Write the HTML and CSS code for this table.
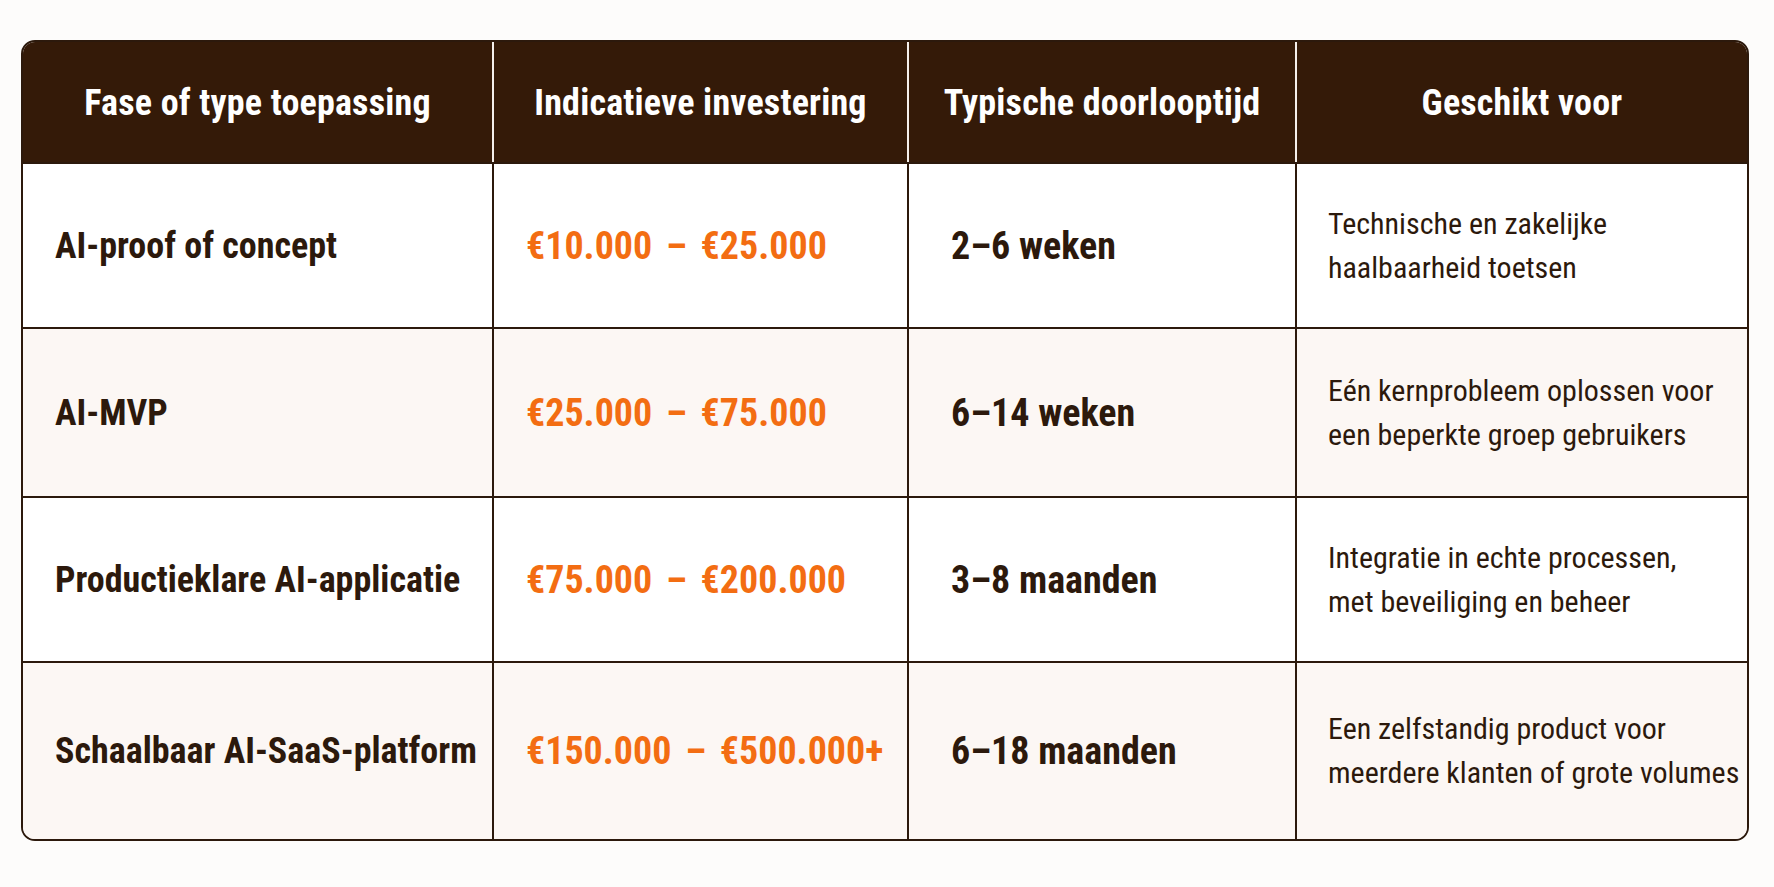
FILE: index.html
```html
<!DOCTYPE html>
<html lang="nl">
<head>
<meta charset="utf-8">
<title>Indicatieve kosten AI-toepassingen</title>
<link rel="stylesheet" href="styles.css">
</head>
<body>
<div class="table">
  <div class="row head">
    <div class="cell">Fase of type toepassing</div>
    <div class="cell">Indicatieve investering</div>
    <div class="cell">Typische doorlooptijd</div>
    <div class="cell">Geschikt voor</div>
  </div>
  <div class="row r1">
    <div class="cell name">AI-proof of concept</div>
    <div class="cell price">€10.000 – €25.000</div>
    <div class="cell time">2–6 weken</div>
    <div class="cell desc">Technische en zakelijke<br>haalbaarheid toetsen</div>
  </div>
  <div class="row r2 alt">
    <div class="cell name">AI-MVP</div>
    <div class="cell price">€25.000 – €75.000</div>
    <div class="cell time">6–14 weken</div>
    <div class="cell desc">Eén kernprobleem oplossen voor<br>een beperkte groep gebruikers</div>
  </div>
  <div class="row r3">
    <div class="cell name">Productieklare AI-applicatie</div>
    <div class="cell price">€75.000 – €200.000</div>
    <div class="cell time">3–8 maanden</div>
    <div class="cell desc">Integratie in echte processen,<br>met beveiliging en beheer</div>
  </div>
  <div class="row r4 alt">
    <div class="cell name">Schaalbaar AI-SaaS-platform</div>
    <div class="cell price">€150.000 – €500.000+</div>
    <div class="cell time">6–18 maanden</div>
    <div class="cell desc">Een zelfstandig product voor<br>meerdere klanten of grote volumes</div>
  </div>
</div>
</body>
</html>
```
FILE: styles.css
```css
* { box-sizing: border-box; }

body {
  margin: 0;
  background: #fdfcfb;
  font-family: "Roboto", "Roboto Condensed", "Liberation Sans", sans-serif;
  font-stretch: 75%;
  color: #2c190c;
}

.table {
  margin: 40px 0 0 21px;
  width: 1728px;
  border: 2px solid #2c190c;
  border-radius: 14px;
  overflow: hidden;
  background: #ffffff;
}

.row {
  display: grid;
  grid-template-columns: 469px 415px 388px 1fr;
  border-top: 2px solid #2c190c;
}

.row.head {
  height: 120px;
  border-top: none;
  background: #341a08;
  color: #ffffff;
}

.r1 { height: 165px; }
.r2 { height: 169px; }
.r3 { height: 165px; }
.r4 { height: 178px; }

.row.alt { background: #fcf7f4; }

.cell {
  display: flex;
  align-items: center;
  padding-left: 32px;
  border-left: 2px solid #2c190c;
}

.cell:first-child { border-left: none; }

.head .cell {
  justify-content: center;
  padding-left: 0;
  padding-top: 2px;
  font-size: 36px;
  font-weight: 700;
  letter-spacing: 0.2px;
  border-left-color: #f4efeb;
}

.name {
  font-size: 36px;
  font-weight: 700;
}

.price {
  font-size: 38px;
  font-weight: 700;
  word-spacing: 5px;
  color: #f36d12;
}

.time {
  font-size: 38px;
  font-weight: 700;
  padding-left: 42px;
}

.desc {
  font-size: 30px;
  font-weight: 400;
  line-height: 44px;
  padding-left: 31px;
}
```
